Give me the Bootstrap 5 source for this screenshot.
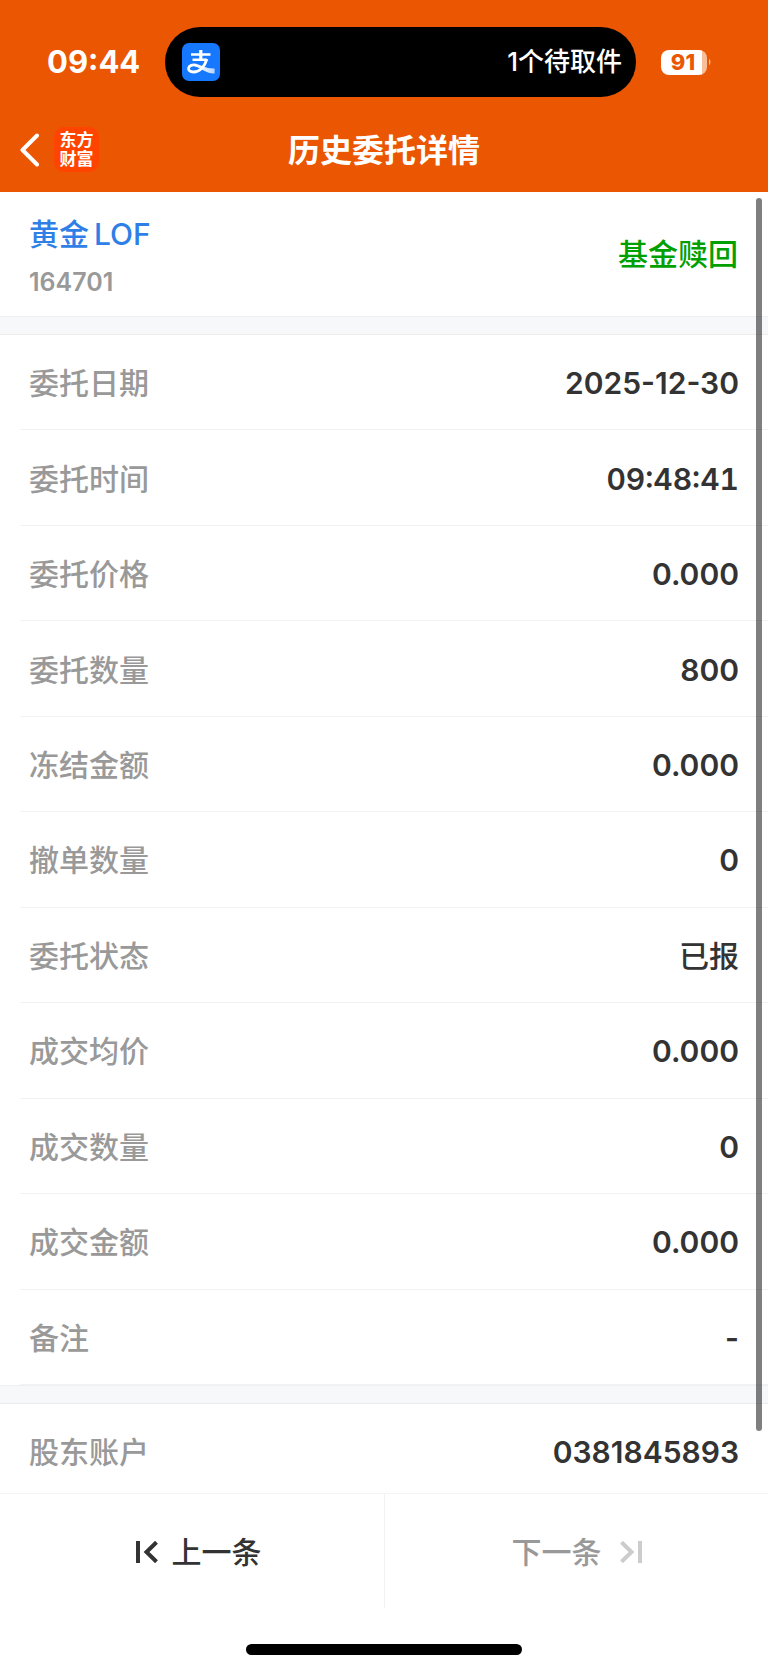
<!DOCTYPE html>
<html lang="zh-CN">
<head>
<meta charset="utf-8">
<meta name="viewport" content="width=device-width, initial-scale=1">
<title>历史委托详情</title>
<link href="https://cdn.jsdelivr.net/npm/bootstrap@5.3.0/dist/css/bootstrap.min.css" rel="stylesheet">
<style>
  body { font-family: Inter, "Noto Sans CJK SC", sans-serif; color: #333; background: #fff; font-weight: 500; }
  .app-top { background: #eb5602; color: #fff; padding-top: 27px; }
  .status-side { flex: 0 0 165px; padding-left: 47px; font-size: 31px; font-weight: 700; line-height: 36px; }
  .status-end { flex: 0 0 132px; padding-left: 25px; }
  .island { background: #000; border-radius: 35px; height: 70px; padding: 0 14px 0 17px; font-size: 26px; line-height: 36px; }
  .battery { width: 46px; height: 25px; border-radius: 8px; font-size: 22px; line-height: 25px; font-weight: 800; color: #eb5602;
    background: linear-gradient(to right, #fff 90%, #f8bd99 90%); padding-right: 2px; }
  .title-bar { height: 95px; padding: 10px 20px 0; }
  .title-bar h1 { font-size: 32px; line-height: 40px; font-weight: 700; padding-top: 2px; }
  .title-side { flex: 1 1 0; }
  .brand-mark { width: 45px; height: 45px; border-radius: 10px; background: #ff4400; color: #fff; font-size: 17px; line-height: 19px; font-weight: 700; }
  .summary { height: 124px; padding: 0 30px 0 29px; }
  .fund-name { color: #2f7fe6; font-size: 30px; line-height: 40px; text-decoration: none; gap: 5px; margin-top: 4px; }
  .fund-code { color: #999; font-size: 25px; line-height: 32px; margin-top: 12px; font-weight: 600; }
  .side-tag { color: #00a000; font-size: 30px; line-height: 40px; }
  .band { height: 19px; background: #f6f8fa; border-top: 1px solid #eff0f1; border-bottom: 1px solid #ececec; }
  .entry { margin-left: 20px; padding: 2px 29px 0 9px; min-height: 60px; border-bottom: 1px solid #f2f2f2; font-size: 30px; line-height: 40px; }
  .entry dt { color: #999; font-weight: 500; }
  .entry dd { font-weight: 600; }
  .entry dd.plain { font-weight: 500; }
  .entry dd.even-digits { font-variant-numeric: tabular-nums; }
  .entry-last { flex: 0 0 89px; border: 0; padding-top: 6px; }
  .scroll-thumb { position: absolute; top: 6px; right: 6px; bottom: 62px; width: 6px; border-radius: 3px; background: rgba(0,0,0,.5); }
  .pager { border-top: 1px solid #f4f4f4; }
  .pager .btn { height: 114px; border: 0; border-radius: 0; font-size: 30px; line-height: 40px; font-weight: 500; color: #333; gap: 14px; padding: 2px 0 0 13px; }
  .pager .btn:disabled { color: #999; opacity: 1; gap: 18px; padding-left: 0; }
  .pager .btn + .btn { border-left: 1px solid #f2f2f2; }
  .home-bar { width: 36%; height: 11px; border-radius: 6px; background: #000; margin: 36px auto 15px; }
</style>
</head>
<body class="min-vh-100 d-flex flex-column">
<header class="app-top">
  <div class="d-flex align-items-center">
    <div class="status-side">09:44</div>
    <div class="island flex-fill d-flex align-items-center justify-content-between">
      <svg width="38" height="38" viewBox="0 0 38 38" role="img" aria-label="支付宝">
        <defs>
          <linearGradient id="ribbon" x1="0" x2="1"><stop offset="0" stop-color="#fff"/><stop offset="1" stop-color="#fff" stop-opacity=".7"/></linearGradient>
        </defs>
        <rect width="38" height="38" rx="7" fill="#1677ff"/>
        <g fill="none" stroke="#fff">
          <path stroke-width="2.400" d="M9 11.500H28.500M10.500 16.700H24.500"/>
          <path stroke-width="3.200" d="M18.800 7V16.500"/>
          <path stroke-width="2.800" d="M25 16C23 22 18.500 29 11.500 29C7.800 29 6.200 27.200 6.600 25C7 22.500 10.500 21.300 14 22.200"/>
        </g>
        <path d="M13.500 21C19.500 21.500 24 26 32.600 25.500V30.500C25 31 20 25.500 13 23.500Z" fill="url(#ribbon)"/>
      </svg>
      <span>1个待取件</span>
    </div>
    <div class="status-end d-flex align-items-center">
      <div class="battery text-center">91</div>
      <svg width="5" height="8" viewBox="0 0 5 8" aria-hidden="true"><path d="M2 0.500Q5 4 2 7.500Z" fill="#f8bd99"/></svg>
    </div>
  </div>
  <nav class="title-bar d-flex align-items-center" aria-label="标题栏">
    <div class="title-side d-flex align-items-center">
      <button type="button" class="btn p-0 border-0 d-flex" aria-label="返回">
        <svg width="34" height="34" viewBox="0 0 34 34" fill="none" stroke="#fff" stroke-width="4" stroke-linecap="round" stroke-linejoin="round"><path d="M17 2.500L2.500 17L17 31.500"/></svg>
      </button>
      <div class="brand-mark d-flex flex-column align-items-center justify-content-center"><span>东方</span><span>财富</span></div>
    </div>
    <h1 class="mb-0">历史委托详情</h1>
    <div class="title-side"></div>
  </nav>
</header>
<main class="flex-fill d-flex flex-column position-relative">
  <section class="summary d-flex align-items-center justify-content-between">
    <div>
      <a href="#" class="fund-name d-flex"><span>黄金</span> <span>LOF</span></a>
      <div class="fund-code">164701</div>
    </div>
    <div class="side-tag">基金赎回</div>
  </section>
  <div class="band"></div>
  <dl class="m-0 flex-fill d-flex flex-column">
    <div class="entry flex-fill d-flex align-items-center justify-content-between"><dt>委托日期</dt><dd class="m-0">2025-12-30</dd></div>
    <div class="entry flex-fill d-flex align-items-center justify-content-between"><dt>委托时间</dt><dd class="even-digits m-0">09:48:41</dd></div>
    <div class="entry flex-fill d-flex align-items-center justify-content-between"><dt>委托价格</dt><dd class="m-0">0.000</dd></div>
    <div class="entry flex-fill d-flex align-items-center justify-content-between"><dt>委托数量</dt><dd class="m-0">800</dd></div>
    <div class="entry flex-fill d-flex align-items-center justify-content-between"><dt>冻结金额</dt><dd class="m-0">0.000</dd></div>
    <div class="entry flex-fill d-flex align-items-center justify-content-between"><dt>撤单数量</dt><dd class="m-0">0</dd></div>
    <div class="entry flex-fill d-flex align-items-center justify-content-between"><dt>委托状态</dt><dd class="plain m-0">已报</dd></div>
    <div class="entry flex-fill d-flex align-items-center justify-content-between"><dt>成交均价</dt><dd class="m-0">0.000</dd></div>
    <div class="entry flex-fill d-flex align-items-center justify-content-between"><dt>成交数量</dt><dd class="m-0">0</dd></div>
    <div class="entry flex-fill d-flex align-items-center justify-content-between"><dt>成交金额</dt><dd class="m-0">0.000</dd></div>
    <div class="entry flex-fill d-flex align-items-center justify-content-between"><dt>备注</dt><dd class="m-0">-</dd></div>
  </dl>
  <div class="band"></div>
  <dl class="m-0 d-flex flex-column">
    <div class="entry entry-last d-flex align-items-center justify-content-between"><dt>股东账户</dt><dd class="m-0">0381845893</dd></div>
  </dl>
  <div class="scroll-thumb"></div>
</main>
<footer>
  <div class="pager d-flex">
    <button type="button" class="btn w-50 d-flex align-items-center justify-content-center">
      <svg width="22" height="22" viewBox="0 0 22 22" fill="none" stroke="#333" stroke-width="4" aria-hidden="true"><path d="M2 0V22M20.500 1.200L10.500 11L20.500 20.800"/></svg>
      上一条
    </button>
    <button type="button" class="btn w-50 d-flex align-items-center justify-content-center" disabled>
      下一条
      <svg width="22" height="22" viewBox="0 0 22 22" fill="none" stroke="#ccc" stroke-width="4" aria-hidden="true"><path d="M20 0V22M1.500 1.200L11.500 11L1.500 20.800"/></svg>
    </button>
  </div>
  <div class="home-bar"></div>
</footer>
<script src="https://cdn.jsdelivr.net/npm/bootstrap@5.3.0/dist/js/bootstrap.bundle.min.js"></script>
</body>
</html>
